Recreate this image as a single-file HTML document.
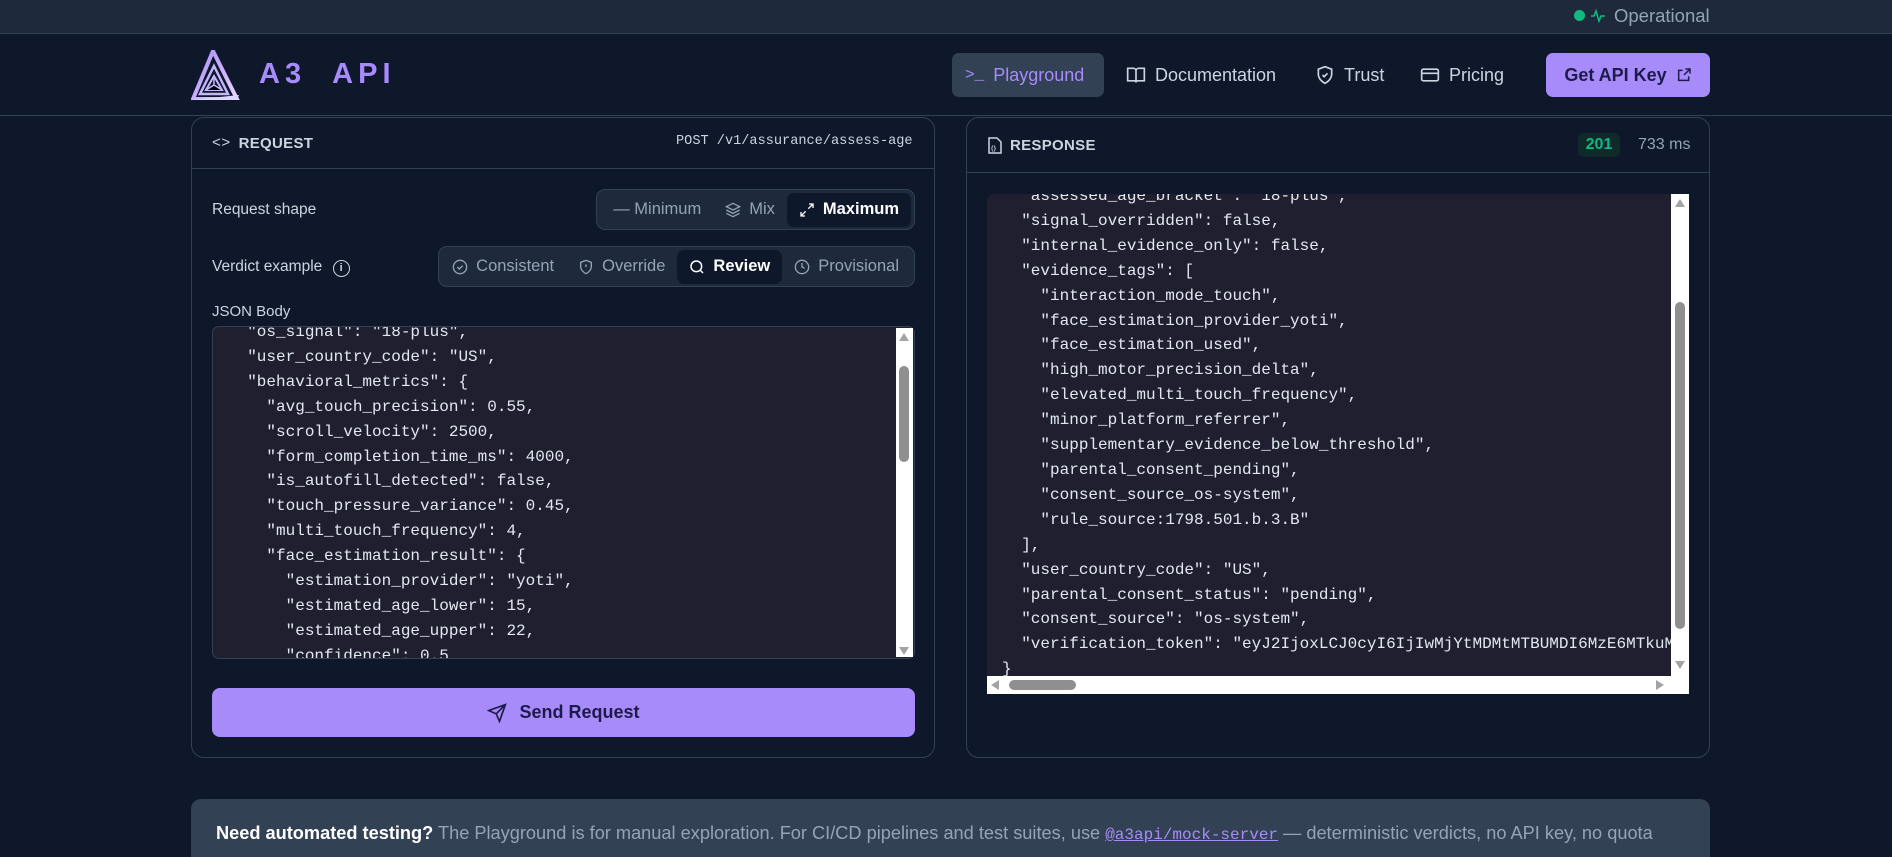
<!DOCTYPE html>
<html><head><meta charset="utf-8"><style>
*{box-sizing:border-box;margin:0;padding:0}
html,body{width:1892px;height:857px;overflow:hidden}
body{background:#0f172a;font-family:"Liberation Sans",sans-serif;color:#cbd5e1;position:relative}
.abs{position:absolute}
.top{left:0;top:0;width:1892px;height:34px;background:#1e293b;border-bottom:1px solid #334155}
.nav{left:0;top:34px;width:1892px;height:82px;border-bottom:1px solid #334155}
.navi{position:absolute;top:53px;height:44px;display:flex;align-items:center;font-size:18px;color:#cbd5e1;gap:9px}
.panel{border:1px solid #334155;border-radius:13px;background:#0f172a}
.hdr{font-size:15px;font-weight:bold;letter-spacing:.3px;color:#cbd5e1;display:flex;align-items:center;gap:8px}
.lbl{font-size:15.5px;color:#cbd5e1}
.seg{border:1px solid #334155;background:#1e293b;border-radius:9px;display:flex;align-items:center;justify-content:flex-end;padding:0 3px 0 4px;gap:0}
.seg div{height:34px;display:flex;align-items:center;gap:8px;padding:0 12px;font-size:16.5px;color:#94a3b8;border-radius:7px}
.seg div.on{background:#0f172a;color:#fff;font-weight:bold}
.code{background:#1f1f2f;overflow:hidden;font-family:"Liberation Mono",monospace;font-size:16px;line-height:24.9px;color:#e2e8f0;white-space:pre}
.sb{background:#fff}
</style></head><body>
<div class="abs top"></div>
<div class="abs" style="left:1574px;top:10px;width:11px;height:11px;border-radius:50%;background:#10b981"></div>
<svg class="abs" style="left:1590px;top:7px" width="16" height="18" viewBox="0 0 16 18"><path d="M1 9h3l2-5 3 10 2-5h4" fill="none" stroke="#10b981" stroke-width="1.6"/></svg>
<div class="abs" style="left:1614px;top:5px;font-size:18.5px;color:#94a3b8">Operational</div>
<div class="abs nav"></div>
<svg class="abs" style="left:191px;top:50px" width="50" height="50" viewBox="0 0 50 50"><defs><linearGradient id="g" x1="0" y1="0" x2="1" y2="1"><stop offset="0" stop-color="#a78bfa"/><stop offset="1" stop-color="#e9d5ff"/></linearGradient></defs><path d="M22 1 L46 49 L2 49 Z" fill="none" stroke="url(#g)" stroke-width="4"/><path d="M23 16 L37 44 L9 44 Z" fill="none" stroke="#c4b5fd" stroke-width="2.5"/><path d="M23 26 L31 40 L15 40 Z" fill="none" stroke="#c4b5fd" stroke-width="2"/><path d="M23 26 L23 35 M15 40 L23 35 L31 40" stroke="#c4b5fd" stroke-width="1.5"/><path d="M0 50 L48 45 L46 50 Z" fill="#ddd6fe"/></svg>
<div class="abs" style="left:259px;top:58px;font-size:29px;font-weight:bold;color:#a78bfa;letter-spacing:5px">A3&nbsp;&nbsp;API</div>
<div class="navi" style="left:952px;width:152px;background:#334155;border-radius:7px;padding-left:13px;color:#a78bfa"><span style="font-family:'Liberation Mono';font-size:16px">&gt;_</span>Playground</div>
<div class="navi" style="left:1126px"><svg width="20" height="20" viewBox="0 0 24 24" fill="none" stroke="#cbd5e1" stroke-width="2"><path d="M2 4h7a3 3 0 0 1 3 3v14a2 2 0 0 0-2-2H2zM22 4h-7a3 3 0 0 0-3 3v14a2 2 0 0 1 2-2h8z"/></svg>Documentation</div>
<div class="navi" style="left:1315px"><svg width="20" height="20" viewBox="0 0 24 24" fill="none" stroke="#cbd5e1" stroke-width="2"><path d="M12 2l8 3v6c0 5-4 9-8 11-4-2-8-6-8-11V5z"/><path d="M9 12l2 2 4-4"/></svg>Trust</div>
<div class="navi" style="left:1420px"><svg width="20" height="20" viewBox="0 0 24 24" fill="none" stroke="#cbd5e1" stroke-width="2"><rect x="2" y="5" width="20" height="14" rx="2"/><path d="M2 10h20"/></svg>Pricing</div>
<div class="navi" style="left:1546px;width:164px;background:#a78bfa;border-radius:7px;justify-content:center;color:#1e1b4b;font-weight:bold">Get API Key <svg width="16" height="16" viewBox="0 0 24 24" fill="none" stroke="#1e1b4b" stroke-width="2.2"><path d="M14 3h7v7M21 3l-9 9M19 14v6H4V5h6"/></svg></div>

<!-- Request panel -->
<div class="abs panel" style="left:191px;top:117px;width:744px;height:641px"></div>
<div class="abs" style="left:192px;top:168px;width:742px;height:1px;background:#334155"></div>
<div class="abs hdr" style="left:212px;top:135px"><span style="font-family:'Liberation Mono';font-weight:normal;font-size:15px">&lt;&gt;</span>REQUEST</div>
<div class="abs" style="left:676px;top:134px;font-family:'Liberation Mono';font-size:13.6px;color:#cbd5e1">POST /v1/assurance/assess-age</div>
<div class="abs lbl" style="left:212px;top:201px">Request shape</div>
<div class="abs seg" style="left:596px;top:189px;width:319px;height:41px">
<div>— Minimum</div><div><svg width="16" height="16" viewBox="0 0 24 24" fill="none" stroke="#94a3b8" stroke-width="2"><path d="M12 2l10 5-10 5-10-5z M2 12l10 5 10-5 M2 17l10 5 10-5"/></svg>Mix</div><div class="on"><svg width="16" height="16" viewBox="0 0 24 24" fill="none" stroke="#fff" stroke-width="2"><path d="M15 3h6v6M21 3l-7 7M9 21H3v-6M3 21l7-7"/></svg>Maximum</div></div>
<div class="abs lbl" style="left:212px;top:258px">Verdict example <span style="display:inline-block;width:17px;height:17px;border:1.6px solid #cbd5e1;border-radius:50%;font-size:11px;text-align:center;line-height:14px;margin-left:6px;font-weight:bold">i</span></div>
<div class="abs seg" style="left:438px;top:246px;width:477px;height:41px">
<div><svg width="16" height="16" viewBox="0 0 24 24" fill="none" stroke="#94a3b8" stroke-width="2"><circle cx="12" cy="12" r="10"/><path d="M8 12l3 3 5-5"/></svg>Consistent</div>
<div><svg width="16" height="16" viewBox="0 0 24 24" fill="none" stroke="#94a3b8" stroke-width="2"><path d="M12 2l8 3v6c0 5-4 9-8 11-4-2-8-6-8-11V5z M12 8v4 M12 16h.01"/></svg>Override</div>
<div class="on"><svg width="16" height="16" viewBox="0 0 24 24" fill="none" stroke="#fff" stroke-width="2.2"><circle cx="11" cy="11" r="8"/><path d="M21 21l-4.3-4.3"/></svg>Review</div>
<div><svg width="16" height="16" viewBox="0 0 24 24" fill="none" stroke="#94a3b8" stroke-width="2"><circle cx="12" cy="12" r="10"/><path d="M12 6v6l4 2"/></svg>Provisional</div></div>
<div class="abs lbl" style="left:212px;top:303px;font-size:15px">JSON Body</div>
<div class="abs code" style="left:212px;top:326px;width:703px;height:333px;border:1px solid #334155;border-radius:7px"><div style="position:absolute;left:15px;top:-7px">  "os_signal": "18-plus",
  "user_country_code": "US",
  "behavioral_metrics": {
    "avg_touch_precision": 0.55,
    "scroll_velocity": 2500,
    "form_completion_time_ms": 4000,
    "is_autofill_detected": false,
    "touch_pressure_variance": 0.45,
    "multi_touch_frequency": 4,
    "face_estimation_result": {
      "estimation_provider": "yoti",
      "estimated_age_lower": 15,
      "estimated_age_upper": 22,
      "confidence": 0.5,</div></div>
<div class="abs sb" style="left:896px;top:328px;width:17px;height:329px"></div>
<div class="abs" style="left:899px;top:333px;border:5.5px solid transparent;border-bottom:8px solid #a3a3a3;border-top:0"></div>
<div class="abs" style="left:899px;top:647px;border:5.5px solid transparent;border-top:8px solid #a3a3a3;border-bottom:0"></div>
<div class="abs" style="left:899px;top:366px;width:10px;height:96px;background:#8f8f8f;border-radius:5px"></div>
<div class="abs" style="left:212px;top:688px;width:703px;height:49px;background:#a78bfa;border-radius:8px;display:flex;align-items:center;justify-content:center;gap:12px;font-size:18px;font-weight:bold;color:#1e1b4b"><svg width="20" height="20" viewBox="0 0 24 24" fill="none" stroke="#1e1b4b" stroke-width="2"><path d="M22 2L11 13M22 2l-7 20-4-9-9-4z"/></svg>Send Request</div>

<!-- Response panel -->
<div class="abs panel" style="left:966px;top:117px;width:744px;height:641px"></div>
<div class="abs" style="left:967px;top:172px;width:742px;height:1px;background:#334155"></div>
<div class="abs hdr" style="left:988px;top:137px"><svg width="14" height="17" viewBox="0 0 14 17" fill="none" stroke="#cbd5e1" stroke-width="1.5"><path d="M1 1h8l4 4v11H1z"/><text x="3" y="13" font-size="6" fill="#cbd5e1" stroke="none">{}</text></svg>RESPONSE</div>
<div class="abs" style="left:1578px;top:133px;width:42px;height:24px;background:#0f2a2a;border-radius:6px;color:#10b981;font-size:16px;font-weight:bold;text-align:center;line-height:24px">201</div>
<div class="abs" style="left:1638px;top:136px;font-size:16px;color:#94a3b8">733 ms</div>
<div class="abs code" style="left:987px;top:194px;width:702px;height:500px;border-radius:7px 0 0 0"><div style="position:absolute;left:15px;top:-10px">  "assessed_age_bracket": "18-plus",
  "signal_overridden": false,
  "internal_evidence_only": false,
  "evidence_tags": [
    "interaction_mode_touch",
    "face_estimation_provider_yoti",
    "face_estimation_used",
    "high_motor_precision_delta",
    "elevated_multi_touch_frequency",
    "minor_platform_referrer",
    "supplementary_evidence_below_threshold",
    "parental_consent_pending",
    "consent_source_os-system",
    "rule_source:1798.501.b.3.B"
  ],
  "user_country_code": "US",
  "parental_consent_status": "pending",
  "consent_source": "os-system",
  "verification_token": "eyJ2IjoxLCJ0cyI6IjIwMjYtMDMtMTBUMDI6MzE6MTkuMDAwWiJ9"
}</div></div>
<div class="abs sb" style="left:1671px;top:194px;width:18px;height:482px"></div>
<div class="abs sb" style="left:987px;top:676px;width:702px;height:18px"></div>
<div class="abs" style="left:1675px;top:199px;border:5.5px solid transparent;border-bottom:8px solid #a3a3a3;border-top:0"></div>
<div class="abs" style="left:1675px;top:661px;border:5.5px solid transparent;border-top:8px solid #a3a3a3;border-bottom:0"></div>
<div class="abs" style="left:1675px;top:302px;width:10px;height:327px;background:#8f8f8f;border-radius:5px"></div>
<div class="abs" style="left:991px;top:680px;border:5.5px solid transparent;border-right:8px solid #a3a3a3;border-left:0"></div>
<div class="abs" style="left:1656px;top:680px;border:5.5px solid transparent;border-left:8px solid #a3a3a3;border-right:0"></div>
<div class="abs" style="left:1009px;top:680px;width:67px;height:10px;background:#8f8f8f;border-radius:5px"></div>

<!-- banner -->
<div class="abs" style="left:191px;top:799px;width:1519px;height:58px;overflow:hidden;background:#334155;border-radius:10px 10px 0 0;padding:19px 25px 0;font-size:18.2px;line-height:30px;color:#94a3b8"><b style="color:#fff">Need automated testing?</b> The Playground is for manual exploration. For CI/CD pipelines and test suites, use <span style="color:#a78bfa;text-decoration:underline;font-family:'Liberation Mono';font-size:16px">@a3api/mock-server</span> — deterministic verdicts, no API key, no quota burn.</div>
</body></html>
